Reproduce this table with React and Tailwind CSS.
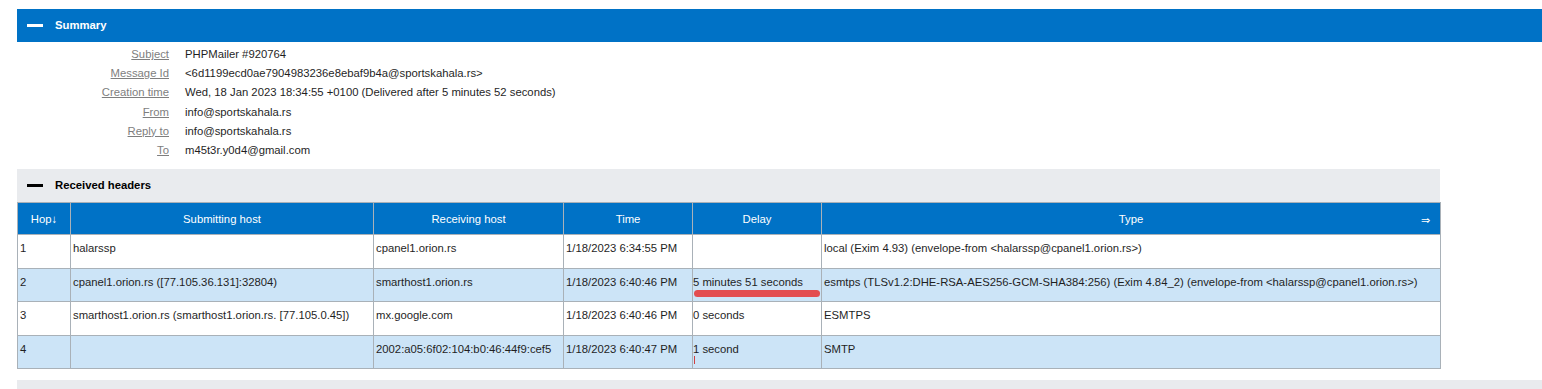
import React from 'react';

const summary = [
  ['Subject', 'PHPMailer #920764'],
  ['Message Id', '<6d1199ecd0ae7904983236e8ebaf9b4a@sportskahala.rs>'],
  ['Creation time', 'Wed, 18 Jan 2023 18:34:55 +0100 (Delivered after 5 minutes 52 seconds)'],
  ['From', 'info@sportskahala.rs'],
  ['Reply to', 'info@sportskahala.rs'],
  ['To', 'm45t3r.y0d4@gmail.com'],
];

const hops = [
  {
    hop: '1',
    from: 'halarssp',
    by: 'cpanel1.orion.rs',
    time: '1/18/2023 6:34:55 PM',
    delay: '',
    type: 'local (Exim 4.93) (envelope-from <halarssp@cpanel1.orion.rs>)',
  },
  {
    hop: '2',
    from: 'cpanel1.orion.rs ([77.105.36.131]:32804)',
    by: 'smarthost1.orion.rs',
    time: '1/18/2023 6:40:46 PM',
    delay: '5 minutes 51 seconds',
    type: 'esmtps (TLSv1.2:DHE-RSA-AES256-GCM-SHA384:256) (Exim 4.84_2) (envelope-from <halarssp@cpanel1.orion.rs>)',
    mark: 'underline',
  },
  {
    hop: '3',
    from: 'smarthost1.orion.rs (smarthost1.orion.rs. [77.105.0.45])',
    by: 'mx.google.com',
    time: '1/18/2023 6:40:46 PM',
    delay: '0 seconds',
    type: 'ESMTPS',
  },
  {
    hop: '4',
    from: '',
    by: '2002:a05:6f02:104:b0:46:44f9:cef5',
    time: '1/18/2023 6:40:47 PM',
    delay: '1 second',
    type: 'SMTP',
    mark: 'tick',
  },
];

export default function App() {
  return (
    <div className="w-[1542px] h-[389px] overflow-hidden bg-white font-['Liberation_Sans',Arial,sans-serif] text-[11.3px] text-[#1f1f1f]">
      <div className="pt-[9px] pl-[17px]">
        {/* Summary */}
        <div className="h-[33px] bg-[#0072c6] flex items-center gap-[12px] pl-[10px]">
          <span className="block w-[16px] h-[3px] bg-white" />
          <span className="text-white font-bold">Summary</span>
        </div>
        <div className="grid grid-cols-[152px_1fr] content-start gap-x-[16px] pt-[3px] h-[127px]">
          {summary.map(([label, value]) => (
            <React.Fragment key={label}>
              <div className="text-right text-[#7e7e7e] underline leading-[19.2px]">{label}</div>
              <div className="leading-[19.2px]">{value}</div>
            </React.Fragment>
          ))}
        </div>

        {/* Received headers */}
        <div className="w-[1423px] bg-[#e9ebee]">
          <div className="h-[33px] flex items-center gap-[12px] pl-[10px]">
            <span className="block w-[16px] h-[3px] bg-black" />
            <span className="font-bold text-black">Received headers</span>
          </div>
          <table className="w-[1423px] table-fixed border-collapse">
            <colgroup>
              <col className="w-[53px]" />
              <col className="w-[303px]" />
              <col className="w-[190px]" />
              <col className="w-[129px]" />
              <col className="w-[129px]" />
              <col className="w-[619px]" />
            </colgroup>
            <thead>
              <tr className="h-[32px] bg-[#0072c6] text-white">
                <th className="border border-[#a9b1b8] font-normal text-center pt-[2px]">Hop↓</th>
                <th className="border border-[#a9b1b8] font-normal text-center pt-[2px]">Submitting host</th>
                <th className="border border-[#a9b1b8] font-normal text-center pt-[2px]">Receiving host</th>
                <th className="border border-[#a9b1b8] font-normal text-center pt-[2px]">Time</th>
                <th className="border border-[#a9b1b8] font-normal text-center pt-[2px]">Delay</th>
                <th className="border border-[#a9b1b8] font-normal text-center pt-[2px] relative">
                  Type
                  <span className="absolute right-[10px] top-[9px] text-[11px]">⇒</span>
                </th>
              </tr>
            </thead>
            <tbody>
              {hops.map((h, i) => (
                <tr key={h.hop} className={`${i % 2 ? 'bg-[#cce4f7] h-[33px]' : 'bg-white h-[34px]'} align-top`}>
                  <td className="border border-[#a9b1b8] pl-[2px] pt-[5px] leading-[16px]">{h.hop}</td>
                  <td className="border border-[#a9b1b8] pl-[2px] pt-[5px] leading-[16px] whitespace-nowrap overflow-hidden">{h.from}</td>
                  <td className="border border-[#a9b1b8] pl-[2px] pt-[5px] leading-[16px] whitespace-nowrap overflow-hidden">{h.by}</td>
                  <td className="border border-[#a9b1b8] pl-[2px] pt-[5px] leading-[16px] whitespace-nowrap">{h.time}</td>
                  <td className="border border-[#a9b1b8] pt-[5px] leading-[16px] whitespace-nowrap relative">
                    {h.delay}
                    {h.mark === 'underline' && (
                      <span className="absolute left-[1px] top-[21px] w-[126px] h-[7px] rounded-full bg-[#e34d50]" />
                    )}
                    {h.mark === 'tick' && (
                      <span className="absolute left-[1px] top-[20px] w-[1px] h-[8px] bg-[#d04040]" />
                    )}
                  </td>
                  <td className="border border-[#a9b1b8] pl-[2px] pt-[5px] leading-[16px] whitespace-nowrap overflow-hidden">{h.type}</td>
                </tr>
              ))}
            </tbody>
          </table>
        </div>

        <div className="mt-[11px] h-[20px] bg-[#e9ebee]" />
      </div>
    </div>
  );
}
